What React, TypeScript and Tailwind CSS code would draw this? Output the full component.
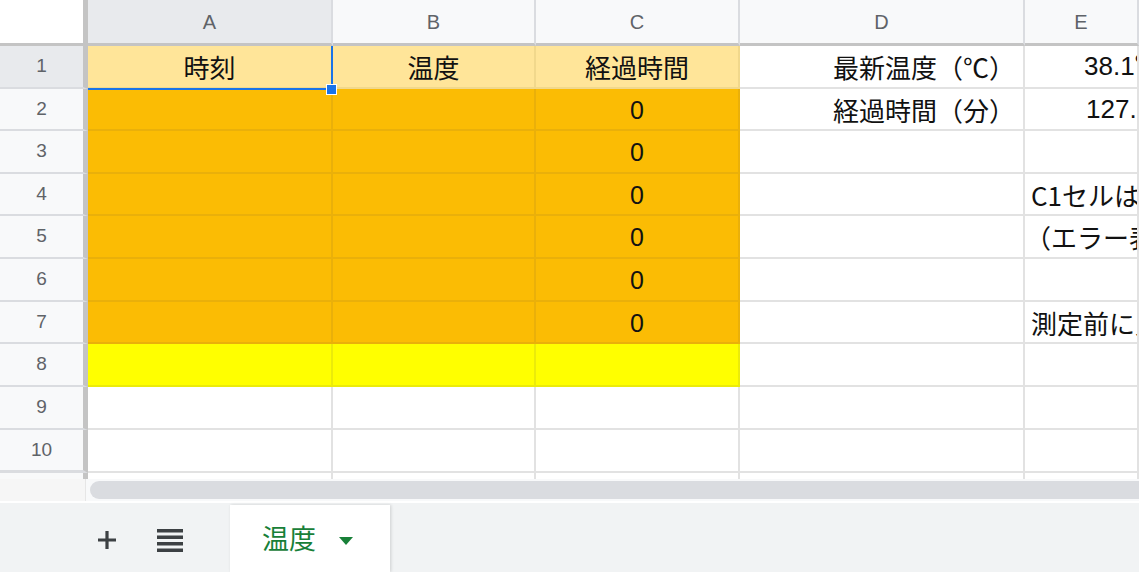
import React from "react";

const cols = ["A", "B", "C", "D", "E"];
const rowH = [43, 42, 43, 42, 43, 43, 42, 43, 43, 43];

const cjk = { fontFamily: '"Noto Sans CJK JP", "Noto Sans", sans-serif' };
const latin = { fontFamily: '"Liberation Sans", Arial, "Noto Sans CJK JP", sans-serif' };

function cellClass(r: number, c: number) {
  if (c <= 2) {
    if (r === 1) return "bg-[#ffe599] border-[#f1d88c]";
    if (r >= 2 && r <= 7) return "bg-[#fbbc04] border-[#eab00a]";
    if (r === 8) return "bg-[#ffff00] border-[#ebeb0a]";
  }
  return "bg-white border-[#e2e2e2]";
}

function cellContent(r: number, c: number): React.ReactNode {
  if (r === 1 && c === 0) return <div className="w-full text-center text-[26px]" style={cjk}>時刻</div>;
  if (r === 1 && c === 1) return <div className="w-full text-center text-[26px]" style={cjk}>温度</div>;
  if (r === 1 && c === 2) return <div className="w-full text-center text-[26px]" style={cjk}>経過時間</div>;
  if (r >= 2 && r <= 7 && c === 2)
    return <div className="w-full text-center text-[25px] text-[#111] pt-[3px]" style={latin}>0</div>;
  if (r === 1 && c === 3)
    return <div className="w-full text-right pr-[8px] text-[26px]" style={cjk}>最新温度（℃）</div>;
  if (r === 2 && c === 3)
    return <div className="w-full text-right pr-[8px] text-[26px]" style={cjk}>経過時間（分）</div>;
  if (r === 1 && c === 4)
    return <div className="pl-[59px] text-[26px]" style={latin}>38.1℃</div>;
  if (r === 2 && c === 4)
    return <div className="pl-[61px] text-[26px]" style={latin}>127.5</div>;
  if (r === 4 && c === 4)
    return <div className="pl-[6px] text-[26px]" style={cjk}>C1セルは時刻の入力が必要です</div>;
  if (r === 5 && c === 4)
    return <div className="pl-[0px] text-[26px]" style={cjk}>（エラー表示になります）</div>;
  if (r === 7 && c === 4)
    return <div className="pl-[6px] text-[26px]" style={cjk}>測定前に入力してください</div>;
  return null;
}

export default function App() {
  return (
    <div className="w-[1139px] h-[572px] overflow-hidden bg-white flex flex-col text-[#111]">
      <div className="relative grid grid-cols-[88px_245px_203px_204px_285px_1fr] grid-rows-[46px_43px_42px_43px_42px_43px_43px_42px_43px_43px_43px_6px] h-[479px] shrink-0">
        <div className="bg-white border-r-[5px] border-b-[3px] border-[#c4c4c4]" />
        {cols.map((c, i) => (
          <div
            key={c}
            className={`flex items-center justify-center border-r-2 border-b-[3px] border-r-[#dadce0] border-b-[#c4c4c4] text-[20px] text-[#5f6368] ${
              i === 0 ? "bg-[#e8eaed]" : "bg-[#f8f9fa]"
            }`}
            style={latin}
          >
            {c}
          </div>
        ))}
        {rowH.map((_, idx) => {
          const r = idx + 1;
          return (
            <React.Fragment key={r}>
              <div
                className={`flex items-center justify-center border-r-[5px] border-b-2 border-r-[#c4c4c4] border-b-[#dadce0] text-[19px] text-[#5f6368] ${
                  r === 1 ? "bg-[#e8eaed]" : "bg-[#f8f9fa]"
                } ${r === 10 ? "border-b-[3px] border-b-[#c4c4c4]" : ""}`}
                style={latin}
              >
                {r}
              </div>
              {cols.map((_, c) => (
                <div
                  key={c}
                  className={`flex items-center overflow-hidden whitespace-nowrap border-r-2 border-b-2 ${cellClass(r, c)}`}
                >
                  {cellContent(r, c)}
                </div>
              ))}
            </React.Fragment>
          );
        })}
        <div className="bg-[#f8f9fa] border-r-[5px] border-[#c4c4c4]" />
        {cols.map((c) => (
          <div key={c} className="bg-white border-r-2 border-[#e2e2e2]" />
        ))}

        <div className="absolute left-[88px] top-[46px] w-[245px] h-[44px] border-r-2 border-b-2 border-[#1a73e8] pointer-events-none" />
        <div className="absolute left-[326px] top-[84px] w-[11px] h-[11px] bg-[#1a73e8] border border-white" />
      </div>

      <div className="flex h-[22px] shrink-0 bg-[#f8f9fa]">
        <div className="w-[86px] border-r border-[#e6e6e6] bg-[#f6f6f6]" />
        <div className="flex-1 flex items-center pl-[4px]">
          <div className="h-[18px] w-full rounded-l-full bg-[#dadce0]" />
        </div>
      </div>
      <div className="h-[2px] bg-white shrink-0" />

      <div className="flex-1 bg-[#f1f3f4] flex items-end">
        <div className="w-[230px] h-full flex items-center pl-[95px] gap-[38px]">
          <svg width="24" height="24" viewBox="0 0 24 24" className="mt-[4px]">
            <path d="M12 3v18M3 12h18" stroke="#3c4043" strokeWidth="3.2" />
          </svg>
          <svg width="26" height="24" viewBox="0 0 26 24" className="mt-[4px]">
            <rect x="0" y="1" width="26" height="3.5" fill="#3c4043" />
            <rect x="0" y="7.5" width="26" height="3.5" fill="#3c4043" />
            <rect x="0" y="14" width="26" height="3.5" fill="#3c4043" />
            <rect x="0" y="20.5" width="26" height="3.5" fill="#3c4043" />
          </svg>
        </div>
        <div className="w-[160px] h-[67px] bg-white shadow-[1px_0_3px_rgba(0,0,0,0.15)] flex items-center pl-[32px]">
          <span className="text-[27px] text-[#188038]" style={cjk}>温度</span>
          <svg width="16" height="10" viewBox="0 0 16 10" className="ml-[22px] mt-[4px]">
            <path d="M1 1h14L8 9z" fill="#188038" />
          </svg>
        </div>
      </div>
    </div>
  );
}
